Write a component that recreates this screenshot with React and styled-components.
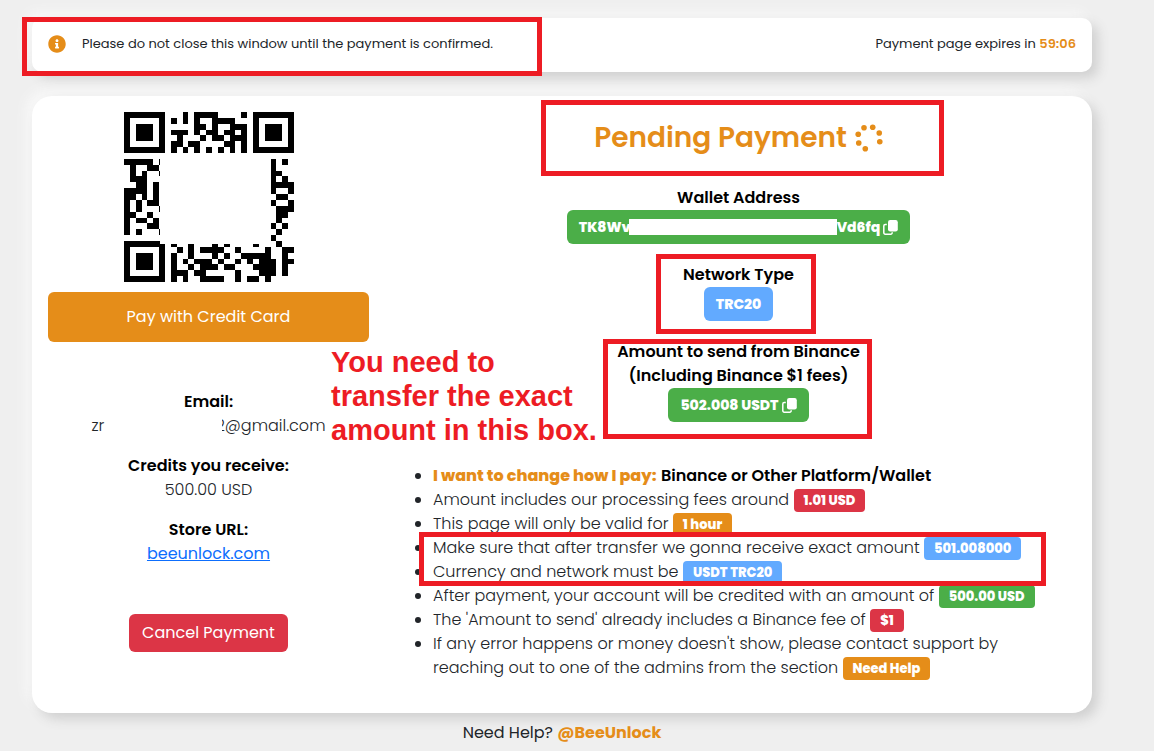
import React from "react";
import styled, { createGlobalStyle } from "styled-components";
import { FaInfoCircle } from "react-icons/fa";

const colors = {
  orange: "#e58d19",
  green: "#4bae48",
  blue: "#62aaff",
  red: "#dc3546",
  marker: "#ed1c24",
};

// rows of the code, "1" is a dark module
const qrRows = [
  "11111110001011110000101111111",
  "10000010101010011110001000001",
  "10111010000011010011101011101",
  "10111010111010110110101011101",
  "10111010010001011011101011101",
  "10000010110110000110101000001",
  "11111110101010101010101111111",
  "00000000000000000000000000000",
  "11111010000000000000000001010",
  "01001100000000000000000001000",
  "01010010000000000000000001100",
  "01110000000000000000000001010",
  "00110100000000000000000001111",
  "11110100000000000000000001001",
  "11010100000000000000000000110",
  "10101100000000000000000001001",
  "10100010000000000000000000111",
  "11001000000000000000000000110",
  "10110100000000000000000000100",
  "10001100000000000000000001010",
  "10100010000000000000000000100",
  "00000000000000000000000001000",
  "11111110100100010100001000100",
  "10000010010101111001000010011",
  "10111010100100010100111110010",
  "10111010101011101001010111011",
  "10111010100101110110001111010",
  "10000010111011000001000111010",
  "11111110101001111001011010000",
];

const spinnerAngles = [-116, -71, -26, 19, 109, 154, 199];

const QrCode = () => (
  <QrImage viewBox="0 0 29 29" role="img" aria-label="Payment QR code" shapeRendering="crispEdges">
    {qrRows.map((row, y) =>
      row
        .split("")
        .map((cell, x) =>
          cell === "1" ? <rect key={`${x}-${y}`} x={x} y={y} width="1" height="1" /> : null
        )
    )}
    <rect x="6.1" y="7" width="18.6" height="15.6" fill="#fff" />
  </QrImage>
);

const Spinner = () => (
  <SpinnerIcon viewBox="0 0 28 28" aria-hidden="true">
    {spinnerAngles.map((a) => (
      <circle
        key={a}
        cx={14 + 11.4 * Math.cos((a * Math.PI) / 180)}
        cy={14 + 11.4 * Math.sin((a * Math.PI) / 180)}
        r="2.8"
      />
    ))}
  </SpinnerIcon>
);

const CopyIcon = () => (
  <CopyImage viewBox="0 0 15 15" aria-hidden="true">
    <rect x="5" y="0" width="9.8" height="11.4" rx="2.2" fill="currentColor" />
    <path
      d="M3.8 4.6H2.2a1.4 1.4 0 0 0-1.4 1.4v6.8a1.4 1.4 0 0 0 1.4 1.4h5.6a1.4 1.4 0 0 0 1.4-1.4v-.6"
      fill="none"
      stroke="currentColor"
      strokeWidth="1.5"
    />
  </CopyImage>
);

const App = () => {
  return (
    <Page>
      <GlobalStyle />
      <TopBar>
        <Notice>
          <FaInfoCircle size={18} color={colors.orange} />
          <span>Please do not close this window until the payment is confirmed.</span>
        </Notice>
        <span>
          Payment page expires in <Timer>59:06</Timer>
        </span>
      </TopBar>

      <Card>
        <Side>
          <QrCode />
          <PayButton type="button">Pay with Credit Card</PayButton>
          <Details>
            <dt>Email:</dt>
            <dd>
              <Email>
                zr
                <span>2@gmail.com</span>
                <EmailMask />
              </Email>
            </dd>
            <dt>Credits you receive:</dt>
            <dd>500.00 USD</dd>
            <dt>Store URL:</dt>
            <dd>
              <a href="#store">beeunlock.com</a>
            </dd>
          </Details>
          <CancelButton type="button">Cancel Payment</CancelButton>
        </Side>

        <Main>
          <Title>
            Pending Payment <Spinner />
          </Title>
          <Field>
            <Label>Wallet Address</Label>
            <ValueButton type="button" $color={colors.green}>
              TK8Wv
              <Mask />
              Vd6fq
              <CopyIcon />
            </ValueButton>
          </Field>
          <Field>
            <Label>Network Type</Label>
            <ValueButton type="button" $color={colors.blue}>
              TRC20
            </ValueButton>
          </Field>
          <Field>
            <Label>
              Amount to send from Binance
              <br />
              (Including Binance $1 fees)
            </Label>
            <ValueButton type="button" $color={colors.green}>
              502.008 USDT
              <CopyIcon />
            </ValueButton>
          </Field>
          <Rules>
            <li>
              <Accent>I want to change how I pay:</Accent> <Strong>Binance or Other Platform/Wallet</Strong>
            </li>
            <li>
              Amount includes our processing fees around <Badge $color={colors.red}>1.01 USD</Badge>
            </li>
            <li>
              This page will only be valid for <Badge $color={colors.orange}>1 hour</Badge>
            </li>
            <li>
              Make sure that after transfer we gonna receive exact amount{" "}
              <Badge $color={colors.blue}>501.008000</Badge>
            </li>
            <li>
              Currency and network must be <Badge $color={colors.blue}>USDT TRC20</Badge>
            </li>
            <li>
              After payment, your account will be credited with an amount of{" "}
              <Badge $color={colors.green}>500.00 USD</Badge>
            </li>
            <li>
              The 'Amount to send' already includes a Binance fee of <Badge $color={colors.red}>$1</Badge>
            </li>
            <li>
              If any error happens or money doesn't show, please contact support by
              <br />
              reaching out to one of the admins from the section{" "}
              <Badge $color={colors.orange}>Need Help</Badge>
            </li>
          </Rules>
        </Main>
      </Card>

      <Footer>
        Need Help? <a href="#support">@BeeUnlock</a>
      </Footer>

      <Marker $x={22} $y={17} $w={520} $h={59} />
      <Marker $x={541} $y={100} $w={403} $h={76} />
      <Marker $x={656} $y={254} $w={160} $h={80} />
      <Marker $x={603} $y={339} $w={269} $h={100} />
      <Marker $x={419} $y={532} $w={627} $h={54} />
      <Callout>
        You need to
        <br />
        transfer the exact
        <br />
        amount in this box.
      </Callout>
    </Page>
  );
};

// Styled components
const GlobalStyle = createGlobalStyle`
  *, *::before, *::after {
    box-sizing: border-box;
  }

  body {
    margin: 0;
    background: #efefef;
    color: #212529;
    font-family: Poppins, Inter, sans-serif;
    font-size: 16px;
    font-weight: 300;
    line-height: 24px;
  }

  button {
    font-family: inherit;
    border: none;
    cursor: pointer;
  }
`;

const Page = styled.div`
  position: relative;
  padding: 18px 62px 0 32px;
`;

const TopBar = styled.header`
  display: flex;
  justify-content: space-between;
  padding: 16px 16px 18px;
  background: #fff;
  border-radius: 10px;
  box-shadow: 6px 6px 12px #d0d0d0, -6px -6px 12px #f8f8f8;
  font-size: 13px;
  font-weight: 400;
  line-height: 20px;
`;

const Notice = styled.div`
  display: flex;
  align-items: center;
  gap: 16px;
`;

const Timer = styled.b`
  color: ${colors.orange};
  font-weight: 600;
`;

const Card = styled.main`
  display: grid;
  grid-template-columns: 321fr 675fr;
  gap: 32px;
  margin-top: 24px;
  padding: 16px 16px 33px;
  background: #fff;
  border-radius: 20px;
  box-shadow: 6px 6px 12px #d0d0d0, -6px -6px 12px #f8f8f8;
`;

const Side = styled.section`
  display: flex;
  flex-direction: column;
  align-items: center;
`;

const QrImage = styled.svg`
  width: 170px;
  height: 170px;
`;

const PayButton = styled.button`
  width: 100%;
  margin-top: 10px;
  padding: 13px;
  color: #fff;
  background: ${colors.orange};
  border-radius: 6px;
  font-size: 16px;
  font-weight: 400;
  line-height: 24px;
`;

const Details = styled.dl`
  margin: 48px 0 0;
  text-align: center;

  dt {
    color: #000;
    font-weight: 600;
  }

  dd {
    margin: 0 0 16px;
  }

  a {
    color: #0d6efd;
    font-weight: 400;
  }
`;

const Email = styled.span`
  position: relative;
  display: flex;
  justify-content: space-between;
  width: 234px;
`;

// covers the middle of the address
const EmailMask = styled.span`
  position: absolute;
  top: 0;
  right: 104px;
  width: 116px;
  height: 24px;
  background: #fff;
`;

const CancelButton = styled.button`
  margin-top: 32px;
  padding: 7px 13px;
  color: #fff;
  background: ${colors.red};
  border-radius: 6px;
  font-size: 16px;
  font-weight: 400;
  line-height: 24px;
`;

const Main = styled.section`
  display: flex;
  flex-direction: column;
  align-items: center;
  gap: 19px;
`;

const Title = styled.h1`
  display: flex;
  align-items: center;
  gap: 8px;
  margin: 8px 0 11px;
  color: ${colors.orange};
  font-size: 28px;
  font-weight: 600;
  line-height: 36px;
`;

const SpinnerIcon = styled.svg`
  width: 28px;
  height: 28px;
  fill: currentColor;
`;

const CopyImage = styled.svg`
  width: 15px;
  height: 15px;
  margin-left: 3px;
`;

const Field = styled.div`
  display: flex;
  flex-direction: column;
  align-items: center;
`;

const Label = styled.span`
  color: #000;
  font-weight: 600;
  text-align: center;
`;

const ValueButton = styled.button`
  display: flex;
  align-items: center;
  height: 34px;
  padding: 0 12px;
  color: #fff;
  background: ${(props) => props.$color};
  border-radius: 6px;
  font-size: 14px;
  font-weight: 800;
`;

const Mask = styled.span`
  width: 208px;
  height: 16px;
  margin-left: -2px;
  background: #fff;
`;

const Rules = styled.ul`
  align-self: stretch;
  margin: 23px 0 0;
  padding-left: 32px;
`;

const Accent = styled.b`
  color: ${colors.orange};
  font-weight: 800;
`;

const Strong = styled.b`
  color: #000;
  font-weight: 600;
`;

const Badge = styled.span`
  display: inline-block;
  padding: 5px 10px;
  color: #fff;
  background: ${(props) => props.$color};
  border-radius: 4px;
  font-size: 13px;
  font-weight: 800;
  line-height: 13px;
`;

const Footer = styled.footer`
  margin-top: 8px;
  text-align: center;
  font-weight: 400;

  a {
    color: ${colors.orange};
    font-weight: 700;
    text-decoration: none;
  }
`;

const Marker = styled.div`
  position: absolute;
  left: ${(props) => props.$x}px;
  top: ${(props) => props.$y}px;
  width: ${(props) => props.$w}px;
  height: ${(props) => props.$h}px;
  border: 5px solid ${colors.marker};
  pointer-events: none;
`;

const Callout = styled.p`
  position: absolute;
  left: 331px;
  top: 345px;
  margin: 0;
  color: ${colors.marker};
  font-family: "Liberation Sans", Arial, sans-serif;
  font-size: 29px;
  font-weight: 700;
  line-height: 34px;
`;

export default App;
